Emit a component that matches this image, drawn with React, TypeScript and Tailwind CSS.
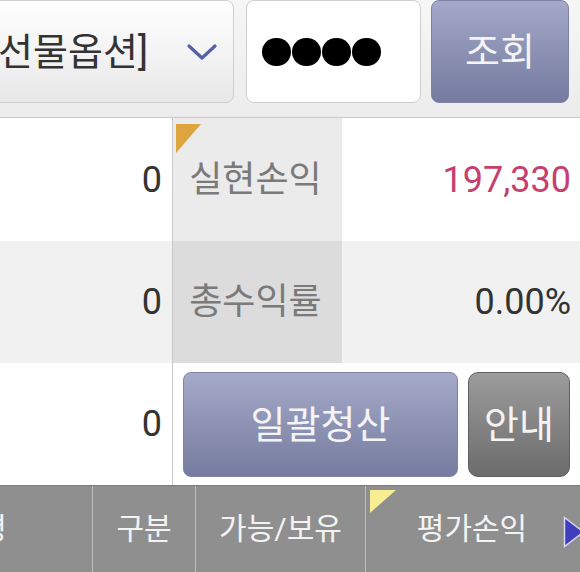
import React from "react";

const FONT = { fontFamily: 'Roboto, "Noto Sans CJK KR", sans-serif' };

function Chevron() {
  return (
    <svg width="30" height="18" viewBox="0 0 30 18" fill="none">
      <path d="M2 3 L15 15 L28 3" stroke="#5560a8" strokeWidth="3.2" strokeLinecap="round" strokeLinejoin="round" />
    </svg>
  );
}

function SearchBar() {
  return (
    <div className="flex h-[118px] items-start border-b border-[#c9c9c9] bg-gradient-to-b from-[#f6f6f6] to-[#ececec] pb-[15px]">
      <div className="ml-[-40px] flex h-[103px] w-[274px] items-center justify-end rounded-[8px] border border-[#cfcfcf] bg-gradient-to-b from-white to-[#e8e8e8] pr-[16px]">
        <span className="whitespace-nowrap text-[38px] leading-none text-[#333]">[선물옵션]</span>
        <span className="ml-[39px] flex w-[30px] items-center">
          <Chevron />
        </span>
      </div>
      <div className="ml-[12px] flex h-[103px] w-[175px] items-center gap-[1px] rounded-[8px] border border-[#cfcfcf] bg-white pl-[15px]">
        {[0, 1, 2, 3].map((i) => (
          <span key={i} className="h-[28px] w-[29px] rounded-full bg-black" />
        ))}
      </div>
      <button className="ml-[10px] flex h-[103px] w-[138px] items-center justify-center rounded-[8px] border border-[#7d83a6] bg-gradient-to-b from-[#a4a9c9] to-[#757b9f] text-[38px] leading-none text-[#f4f4f4]">
        조회
      </button>
    </div>
  );
}

function Row({
  left,
  label,
  value,
  valueColor,
  leftBg,
  labelBg,
  valueBg,
  marker,
  height,
}: {
  left: string;
  label: string;
  value: string;
  valueColor: string;
  leftBg: string;
  labelBg: string;
  valueBg: string;
  marker?: boolean;
  height: string;
}) {
  return (
    <div className={`flex ${height}`}>
      <div className={`flex w-[173px] items-center justify-end border-r border-[#c8c8c8] pr-[10px] text-[36px] leading-none text-[#333] ${leftBg}`}>
        {left}
      </div>
      <div className={`relative flex w-[169px] items-center justify-center text-[36px] leading-none text-[#7a7a7a] ${labelBg}`}>
        {marker && (
          <svg className="absolute left-[3px] top-[6px]" width="25" height="29" viewBox="0 0 25 29">
            <polygon points="0,0 25,0 0,29" fill="#dea43e" />
          </svg>
        )}
        <span className="ml-[-4px]">{label}</span>
      </div>
      <div className={`flex flex-1 items-center justify-end pr-[9px] text-[36px] leading-none ${valueColor} ${valueBg}`}>
        {value}
      </div>
    </div>
  );
}

function HeaderBar() {
  return (
    <div className="flex h-[87px] border-t border-[#7a7a7a] bg-[#8f8f8f] text-[30px] leading-none text-[#f3f3f3]">
      <div className="flex w-[93px] items-center overflow-hidden border-r border-[#bdbdbd]">
        <span className="ml-[-76px] whitespace-nowrap">종목명</span>
      </div>
      <div className="flex w-[103px] items-center justify-center border-r border-[#bdbdbd]">구분</div>
      <div className="flex w-[170px] items-center justify-center border-r border-[#bdbdbd]">가능/보유</div>
      <div className="relative flex flex-1 items-center justify-center">
        <svg className="absolute left-[4px] top-[4px]" width="26" height="23" viewBox="0 0 26 23">
          <polygon points="0,0 26,0 0,23" fill="#f7ee94" />
        </svg>
        <span className="mr-[2px]">평가손익</span>
        <svg className="absolute left-[197px] top-[30px]" width="22" height="32" viewBox="0 0 22 32">
          <polygon points="1.5,1.5 20.5,16 1.5,30.5" fill="#3f3fbd" stroke="#d8d8f0" strokeWidth="1.5" />
        </svg>
      </div>
    </div>
  );
}

export default function App() {
  return (
    <div className="h-[572px] w-[580px] overflow-hidden bg-white" style={FONT}>
      <SearchBar />
      <Row
        height="h-[123px]"
        left="0"
        label="실현손익"
        value="197,330"
        valueColor="text-[#c63f6e]"
        leftBg="bg-white"
        labelBg="bg-[#ebebeb]"
        valueBg="bg-white"
        marker
      />
      <Row
        height="h-[122px]"
        left="0"
        label="총수익률"
        value="0.00%"
        valueColor="text-[#333]"
        leftBg="bg-[#f1f1f1]"
        labelBg="bg-[#dcdcdc]"
        valueBg="bg-[#f1f1f1]"
      />
      <div className="flex h-[122px]">
        <div className="flex w-[173px] items-center justify-end border-r border-[#c8c8c8] pr-[10px] text-[36px] leading-none text-[#333]">
          0
        </div>
        <div className="flex flex-1 items-start gap-[10px] pl-[10px] pt-[9px]">
          <button className="flex h-[105px] w-[275px] items-center justify-center rounded-[8px] border border-[#7d83a6] bg-gradient-to-b from-[#a5aac9] to-[#767c9f] text-[38px] leading-none text-[#f4f4f4]">
            일괄청산
          </button>
          <button className="flex h-[105px] w-[102px] items-center justify-center rounded-[10px] border border-[#5f5f5f] bg-gradient-to-b from-[#9c9c9c] to-[#6c6c6c] text-[38px] leading-none text-[#f4f4f4]">
            안내
          </button>
        </div>
      </div>
      <HeaderBar />
    </div>
  );
}
